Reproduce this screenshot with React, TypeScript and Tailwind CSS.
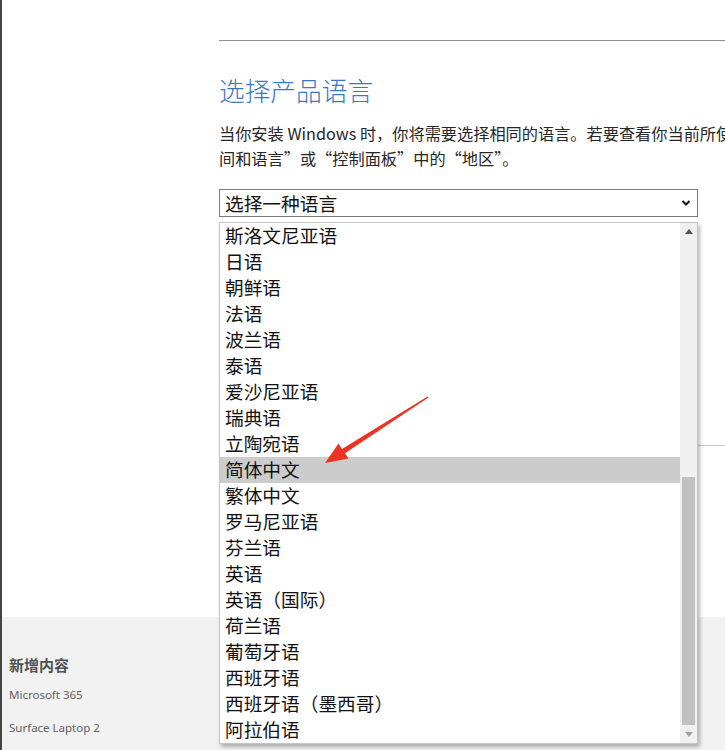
import React from "react";

const items = [
  "斯洛文尼亚语",
  "日语",
  "朝鲜语",
  "法语",
  "波兰语",
  "泰语",
  "爱沙尼亚语",
  "瑞典语",
  "立陶宛语",
  "简体中文",
  "繁体中文",
  "罗马尼亚语",
  "芬兰语",
  "英语",
  "英语（国际）",
  "荷兰语",
  "葡萄牙语",
  "西班牙语",
  "西班牙语（墨西哥）",
  "阿拉伯语",
];

const cjk = { fontFamily: '"Noto Sans CJK SC", "Noto Sans", sans-serif' };
const latin = { fontFamily: '"Noto Sans", "Open Sans", sans-serif' };

export default function App() {
  return (
    <div className="relative w-[725px] h-[750px] overflow-hidden bg-white">
      <div className="flex flex-col h-full border-l-2 border-[#454545]">
        <div className="flex-1 flex flex-col pl-[217px]">
          <div className="h-[40px]" />
          <div className="h-px bg-[#8f8f8f]" />
          <h2
            className="mt-[31px] text-[25.7px] leading-[36px] text-[#3b78c2] font-light whitespace-nowrap"
            style={cjk}
          >
            选择产品语言
          </h2>
          <p
            className="mt-[13px] text-[16.2px] leading-[25px] text-[#262626] whitespace-nowrap"
            style={cjk}
          >
            当你安装 Windows 时，你将需要选择相同的语言。若要查看你当前所使用的语言，请转到“电脑设置”中的“时
            <br />
            间和语言”或“控制面板”中的“地区”。
          </p>
          <div className="mt-[18px] w-[479px] h-[28px] border border-[#7a7a7a] flex items-center justify-between pl-[5px] pr-[6px] bg-white">
            <span className="text-[18.7px] leading-none text-[#111]" style={cjk}>
              选择一种语言
            </span>
            <svg width="10" height="8" viewBox="0 0 10 8">
              <path d="M1.5 2 L5 5.5 L8.5 2" fill="none" stroke="#111" strokeWidth="2" />
            </svg>
          </div>
          <div className="mt-[228px] h-px bg-[#c8c8c8]" />
        </div>
        <div className="h-[133px] bg-[#f2f2f2] pl-[7px] pt-[37px] flex flex-col">
          <div className="text-[15px] leading-[22px] font-bold text-[#505050]" style={cjk}>
            新增内容
          </div>
          <div className="mt-[11px] text-[11.5px] leading-[16px] text-[#616161]" style={latin}>
            Microsoft 365
          </div>
          <div className="mt-[17px] text-[11.5px] leading-[16px] text-[#616161]" style={latin}>
            Surface Laptop 2
          </div>
        </div>
      </div>

      {/* dropdown popup */}
      <div className="absolute left-[219px] top-[222px] w-[479px] h-[522px] bg-white border border-[#c4c4c4] shadow-[2px_3px_4px_rgba(0,0,0,0.28)] flex">
        <div className="flex-1 flex flex-col">
          {items.map((it) => (
            <div
              key={it}
              className={
                "h-[26px] flex items-center pl-[5px] pb-[1px] text-[18.7px] leading-none text-[#111] whitespace-nowrap " +
                (it === "简体中文" ? "bg-[#cccccc]" : "")
              }
              style={cjk}
            >
              {it}
            </div>
          ))}
        </div>
        <div className="w-[17px] bg-[#f0f0f0] flex flex-col items-center">
          <div className="h-[17px] flex items-center justify-center">
            <svg width="8" height="5" viewBox="0 0 8 5">
              <path d="M0 5 L4 0 L8 5 Z" fill="#505050" />
            </svg>
          </div>
          <div className="h-[237px]" />
          <div className="w-[13px] h-[248px] bg-[#c1c1c1]" />
          <div className="flex-1 flex items-center justify-center">
            <svg width="8" height="5" viewBox="0 0 8 5">
              <path d="M0 0 L8 0 L4 5 Z" fill="#a3a3a3" />
            </svg>
          </div>
        </div>
      </div>

      {/* red annotation arrow */}
      <svg
        className="absolute left-0 top-0 pointer-events-none"
        width="725"
        height="750"
        viewBox="0 0 725 750"
      >
        <polygon
          points="325,463 348.5,458.5 345,453.2 428.5,397.6 427.5,396.4 342,449 338.5,443.5"
          fill="#ec3324"
        />
      </svg>
    </div>
  );
}
